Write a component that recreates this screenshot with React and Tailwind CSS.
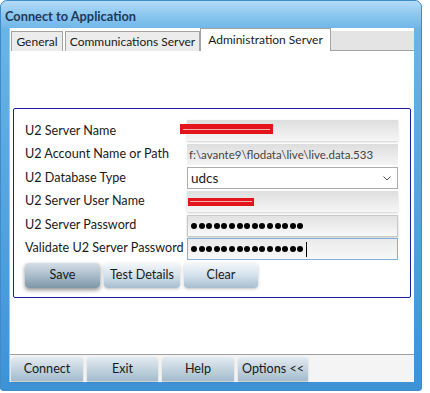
import React from 'react'

const font = { fontFamily: 'Lato, "Noto Sans", sans-serif' }

const Dots = ({ cursor }) => {
    const dots = []
    for (let i = 0; i < 15; i++) {
        dots.push(<div key={i} className='w-[6px] h-[6px] rounded-full bg-black shrink-0' />)
    }
    return (
        <div className='flex items-center gap-[1.6px] pl-[3px] h-full'>
            {dots}
            {cursor && <div className='w-[1px] h-[15px] bg-black ml-[1px]' />}
        </div>
    )
}

const Field = ({ label, children }) => {
    return (
        <div className='flex items-center h-[23.6px] relative'>
            <div className='w-[162px] text-[12.6px] text-[#1a1a1a] leading-none whitespace-nowrap'>{label}</div>
            <div className='w-[211px] h-[21px]'>{children}</div>
        </div>
    )
}

const Btn = ({ label, dark, w }) => {
    return (
        <div
            className={`${w} h-[25px] rounded-[4px] flex items-center justify-center text-[12.6px] text-[#1a1a1a] ${
                dark
                    ? 'bg-gradient-to-b from-[#d5dee5] via-[#a9bccb] to-[#7e97a9] shadow-[0_2px_4px_rgba(0,0,0,0.45)]'
                    : 'bg-gradient-to-b from-[#f3f7fa] via-[#d4e1eb] to-[#a6bed1] shadow-[0_1px_3px_rgba(0,0,0,0.25)]'
            }`}
        >
            {label}
        </div>
    )
}

const BottomBtn = ({ label, w }) => {
    return (
        <div className={`${w} h-[24px] rounded-t-[4px] flex items-center justify-center text-[12.6px] text-[#1a1a1a] bg-gradient-to-b from-[#e4ebf0] via-[#c3d3df] to-[#a4bccd] shadow-[0_1px_2px_rgba(0,0,0,0.2)]`}>
            {label}
        </div>
    )
}

export default function App() {
    return (
        <div className='w-[430px] h-[393px] bg-white' style={font}>
            <div className='w-[422px] h-[391px] rounded-t-[7px] rounded-b-[3px] bg-gradient-to-b from-[#6db7e8] to-[#3d92d6] flex flex-col border border-[#3f8ac8] relative'>
                {/* title bar */}
                <div className='h-[27px] rounded-t-[6px] bg-gradient-to-b from-[#b4dcf6] via-[#8cc7ef] to-[#70b7e8] flex items-center pl-[4px]'>
                    <span className='text-[12.8px] font-bold text-[#1d3a58] pt-[4px]'>Connect to Application</span>
                </div>

                <div className='flex-1 mx-[8px] mr-[7px] flex flex-col bg-[#f4f4f4] border-l border-[#9ccbe9]'>
                    {/* tabs */}
                    <div className='h-[23px] flex items-end bg-white'>
                        <div className='w-[1px] h-full' />
                        <div className='w-[52px] h-[20px] flex items-center justify-center bg-[#ececec] border border-[#a3a3a3] border-b-0 text-[12px] text-[#1a1a1a]'>General</div>
                        <div className='w-[135px] h-[20px] ml-[2px] flex items-center justify-center bg-[#ececec] border border-[#a3a3a3] border-b-0 text-[12px] text-[#1a1a1a]'>Communications Server</div>
                        <div className='w-[131px] h-[23px] flex items-center justify-center bg-white border border-[#a3a3a3] border-b-0 text-[12px] text-[#1a1a1a]'>Administration Server</div>
                        <div className='flex-1 h-[20px] bg-[#e4e4e4] border-b border-[#a3a3a3]' />
                    </div>

                    {/* panel */}
                    <div className='h-[304px] bg-white border-b border-[#a0a0a0] pt-[57px] pl-[3px]'>
                        <div className='w-[398px] h-[190px] border border-[#1c1ca0] rounded-[2px] pl-[11px] pt-[10px]'>
                            <Field label='U2 Server Name'>
                                <div className='h-full bg-gradient-to-b from-[#dedede] to-[#f6f6f6] shadow-[0_1px_2px_rgba(0,0,0,0.2)]' />
                                <div className='absolute left-[155px] top-[5px] w-[93px] h-[10px] bg-[#e3141c] flex items-center px-[3px]'>
                                    <div className='w-full h-[1px] bg-[#f4b0b0]' />
                                </div>
                            </Field>
                            <Field label='U2 Account Name or Path'>
                                <div className='h-full bg-gradient-to-b from-[#dedede] to-[#f4f4f4] flex items-center pl-[2px] text-[11.5px] text-[#444]'>
                                    f:\avante9\flodata\live\live.data.533
                                </div>
                            </Field>
                            <Field label='U2 Database Type'>
                                <div className='h-[22px] bg-white border border-[#acacac] flex items-center justify-between pl-[3px] pr-[6px]'>
                                    <span className='text-[13.5px] text-[#1a1a1a]'>udcs</span>
                                    <svg width='8' height='5' viewBox='0 0 8 5'>
                                        <path d='M0.5 0.5 L4 4 L7.5 0.5' fill='none' stroke='#555' strokeWidth='1' />
                                    </svg>
                                </div>
                            </Field>
                            <Field label='U2 Server User Name'>
                                <div className='h-full bg-gradient-to-b from-[#dedede] to-[#f6f6f6] shadow-[0_1px_2px_rgba(0,0,0,0.2)] flex items-center pl-[1px]'>
                                    <div className='w-[66px] h-[8px] bg-[#e3141c] flex items-center px-[2px]'>
                                        <div className='w-full h-[1px] bg-[#f4b0b0]' />
                                    </div>
                                </div>
                            </Field>
                            <Field label='U2 Server Password'>
                                <div className='h-[22px] bg-gradient-to-b from-[#e2e2e2] to-[#f8f8f8] border border-[#c8c8c8] shadow-[0_1px_2px_rgba(0,0,0,0.2)]'>
                                    <Dots />
                                </div>
                            </Field>
                            <Field label='Validate U2 Server Password'>
                                <div className='h-[22px] bg-gradient-to-b from-[#eaeaea] to-[#f8f8f8] border border-[#86b0dc]'>
                                    <Dots cursor />
                                </div>
                            </Field>
                            <div className='flex gap-[4px] mt-[2px]'>
                                <Btn label='Save' dark w='w-[75px]' />
                                <Btn label='Test Details' w='w-[76px]' />
                                <Btn label='Clear' w='w-[74px]' />
                            </div>
                        </div>
                    </div>

                    {/* bottom buttons */}
                    <div className='flex-1 flex items-end gap-[4px] pl-[1px] pb-[1px]'>
                        <BottomBtn label='Connect' w='w-[72px]' />
                        <BottomBtn label='Exit' w='w-[71px]' />
                        <BottomBtn label='Help' w='w-[72px]' />
                        <BottomBtn label='Options <<' w='w-[70px]' />
                    </div>
                </div>
                <div className='h-[8px]' />
            </div>
        </div>
    )
}
